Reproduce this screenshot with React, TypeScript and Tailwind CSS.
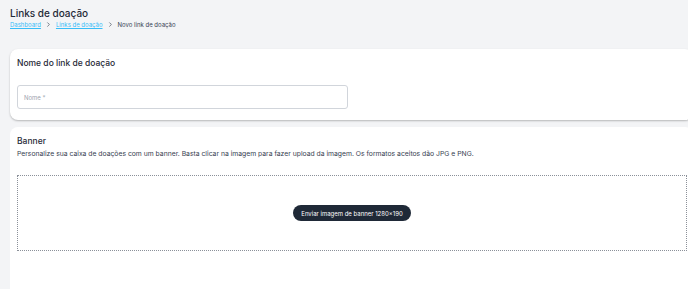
import { ChevronRight } from 'lucide-react';

const CRUMBS = [
  { label: 'Dashboard', link: true },
  { label: 'Links de doação', link: true },
  { label: 'Novo link de doação', link: false },
];

export default function App() {
  return (
    <div className="w-[688px] h-[289px] overflow-hidden bg-[#f3f4f6] text-[#1f2937] font-['Inter',sans-serif]">
      <div className="w-[700px] pl-[10px] pt-[7px]">
        {/* Cabeçalho */}
        <h1 className="text-[10px] leading-[13px] font-medium">Links de doação</h1>
        <nav className="flex items-center text-[6px] leading-[9px]">
          {CRUMBS.map((c, i) => (
            <div key={c.label} className="flex items-center">
              {i > 0 && <ChevronRight className="w-[7px] h-[7px] mx-[4px] text-[#4b5563]" strokeWidth={2.5} />}
              {c.link ? (
                <a className="text-[#38bdf8] underline">{c.label}</a>
              ) : (
                <span className="text-[#374151]">{c.label}</span>
              )}
            </div>
          ))}
        </nav>

        {/* Nome */}
        <section className="mt-[20px] w-[683px] h-[71px] bg-white rounded-[8px] shadow-[0_1px_2px_rgba(0,0,0,0.25)] px-[7px] pt-[9px]">
          <h2 className="text-[8.5px] leading-[11px] font-medium">Nome do link de doação</h2>
          <div className="mt-[16px] w-[331px] h-[24px] border border-[#d1d5db] rounded-[3px] flex items-center px-[6px]">
            <span className="text-[6px] text-[#9ca3af]">Nome *</span>
          </div>
        </section>

        {/* Banner */}
        <section className="mt-[7px] w-[683px] h-[180px] bg-white rounded-[8px] px-[7px] pt-[9px]">
          <h2 className="text-[8.5px] leading-[11px] font-medium">Banner</h2>
          <p className="mt-[2px] text-[6.8px] leading-[10px] text-[#374151]">
            Personalize sua caixa de doações com um banner. Basta clicar na imagem para fazer upload da imagem. Os formatos aceitos dão JPG e PNG.
          </p>
          <div className="mt-[16px] w-[670px] h-[76px] border border-dotted border-[#8b9099] flex items-center justify-center">
            <button className="h-[16px] px-[8px] rounded-full bg-[#1f2937] text-white text-[6px]">
              Enviar imagem de banner 1280×190
            </button>
          </div>
        </section>
      </div>
    </div>
  );
}
